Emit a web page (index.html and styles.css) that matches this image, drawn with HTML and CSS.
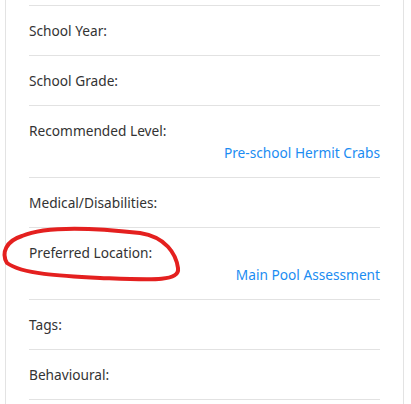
FILE: index.html
```html
<!DOCTYPE html>
<html lang="en">
<head>
<meta charset="utf-8">
<title>Member details</title>
<link rel="stylesheet" href="styles.css">
</head>
<body>
<div class="card">
  <div class="row"><span class="label">School Year:</span></div>
  <div class="row"><span class="label">School Grade:</span></div>
  <div class="row"><span class="label">Recommended Level:</span><a class="value" href="#">Pre-school Hermit Crabs</a></div>
  <div class="row"><span class="label">Medical/Disabilities:</span></div>
  <div class="row"><span class="label">Preferred Location:</span><a class="value" href="#">Main Pool Assessment</a></div>
  <div class="row"><span class="label">Tags:</span></div>
  <div class="row last"><span class="label">Behavioural:</span></div>
</div>
<svg class="scribble" width="411" height="404" viewBox="0 0 411 404">
  <path d="M 22 236 C 45 226, 95 228, 140 233 C 166 237, 176 254, 178 268 C 180 282, 152 280, 100 278 C 60 276, 22 274, 7 263 C 1 253, 6 241, 22 236 Z" fill="none" stroke="#e4201f" stroke-width="4" stroke-linejoin="round"/>
</svg>
</body>
</html>
```
FILE: styles.css
```css
html, body {
  margin: 0;
  padding: 0;
  background: #ffffff;
}
body {
  font-family: "Noto Sans", "Open Sans", sans-serif;
  font-size: 13.7px;
  color: #333333;
  position: relative;
  height: 404px;
  overflow: hidden;
}
.card {
  margin-left: 5px;
  width: 399px;
  box-sizing: border-box;
  border-left: 1px solid #e3e3e3;
  border-right: 1px solid #e3e3e3;
  padding: 5px 23px 20px 23px;
}
.row {
  border-top: 1px solid #e2e2e2;
  padding: 14px 0 13px 0;
  line-height: 22px;
  display: flex;
  flex-direction: column;
}
.row.last {
  border-bottom: 1px solid #e2e2e2;
}
.label {
  display: block;
}
.value {
  align-self: flex-end;
  color: #1b8cf2;
  text-decoration: none;
}
.scribble {
  position: absolute;
  left: 0;
  top: 0;
  pointer-events: none;
}
```
